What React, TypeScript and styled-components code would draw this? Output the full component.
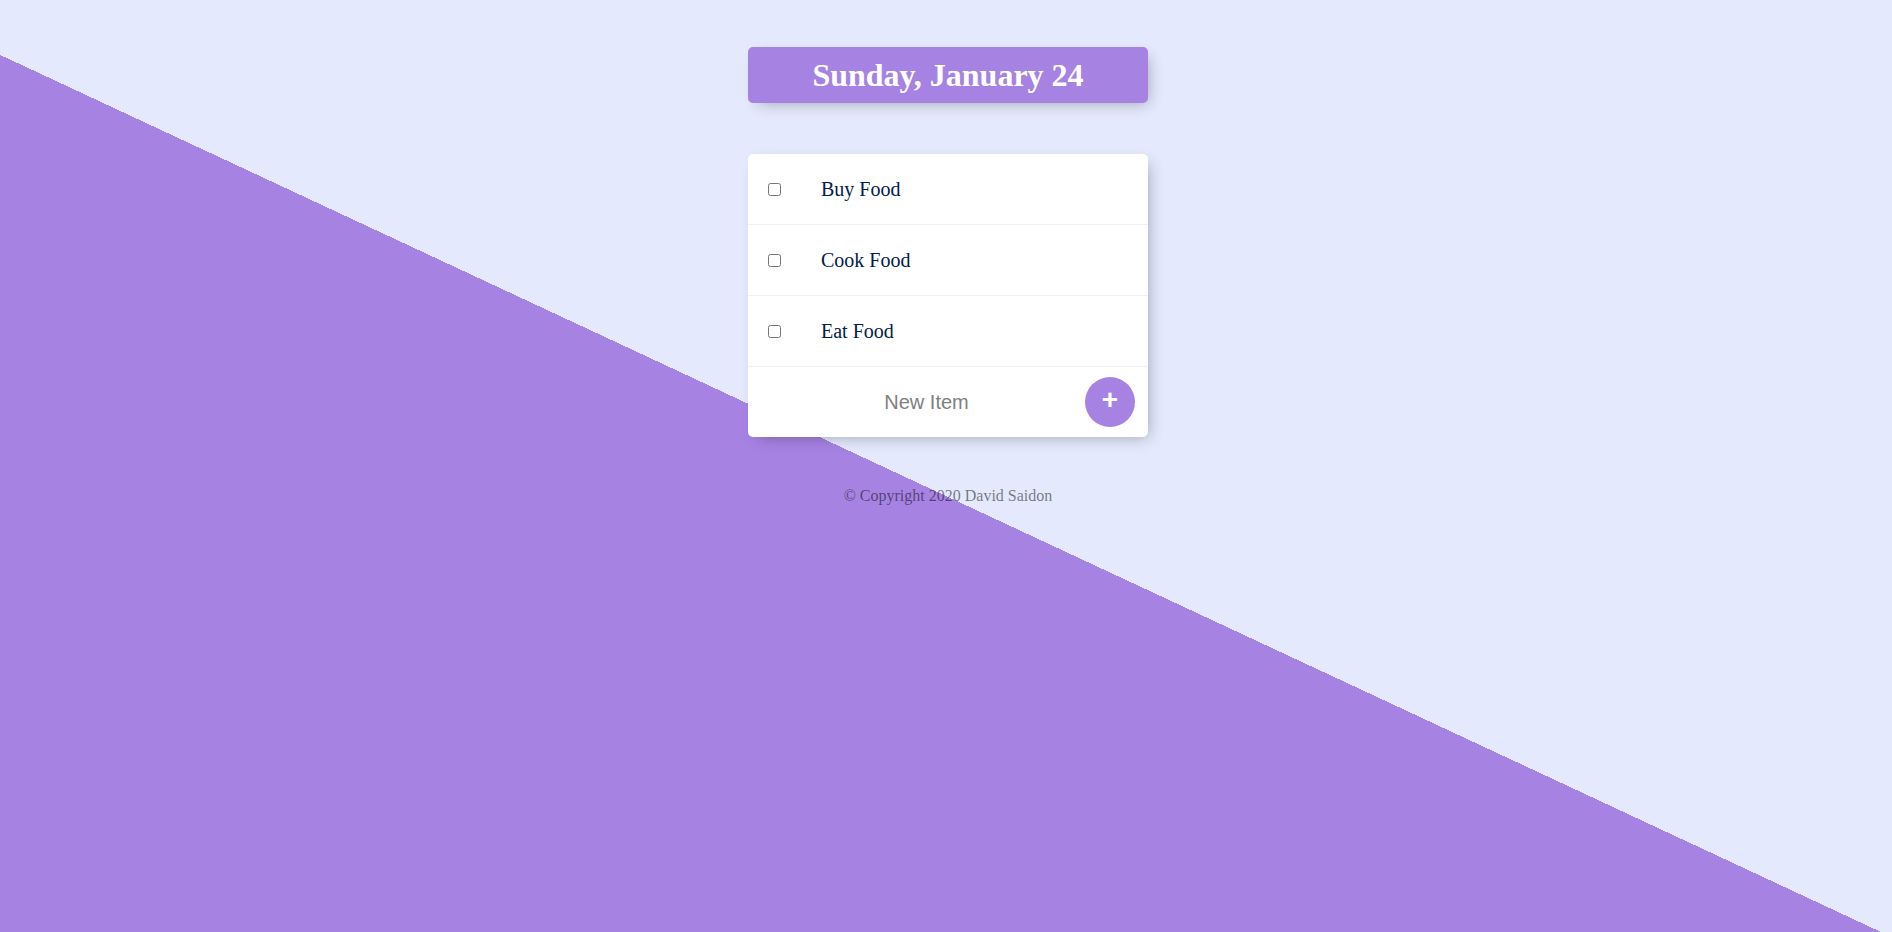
import * as React from "react";
import styled, { createGlobalStyle } from "styled-components";

const GlobalStyle = createGlobalStyle`
  html {
    background-color: #e4e9fd;
    background-image: linear-gradient(25deg, #a683e3 50%, #e4e9fd 50%);
    min-height: 992px;
    font-family: "Liberation Serif", "Times New Roman", serif;
  }
  body {
    margin: 0;
  }
`;

const Page = styled.div`
  padding-top: 47px;
  padding-left: 4px;
`;

const Box = styled.div`
  max-width: 400px;
  margin: 0 auto 51px;
  background: white;
  border-radius: 5px;
  box-shadow: 5px 5px 15px -5px rgba(0, 0, 0, 0.3);
`;

const Heading = styled(Box)`
  background-color: #a683e3;
  text-align: center;
`;

const Title = styled.h1`
  margin: 0;
  padding: 10px;
  color: #fff;
  font-size: 32px;
  line-height: 36px;
  font-weight: bold;
`;

const Item = styled.div`
  min-height: 70px;
  display: flex;
  align-items: center;
  border-bottom: 1px solid #f1f1f1;

  &:last-child {
    border-bottom: 0;
  }
`;

const Check = styled.input`
  margin: 20px;
  width: 13px;
  height: 13px;
`;

const Label = styled.p<{ $done: boolean }>`
  margin: 0;
  padding: 20px;
  font-size: 20px;
  font-weight: 200;
  color: #00204a;
  text-decoration: ${(p) => (p.$done ? "line-through" : "none")};
  text-decoration-color: #a683e3;
`;

const Form = styled.form`
  min-height: 70px;
  display: flex;
  align-items: center;
  margin-left: 20px;
  text-align: center;
`;

const TextInput = styled.input`
  text-align: center;
  height: 60px;
  border: none;
  padding: 1px 2px;
  font-family: "Liberation Sans", Arial, sans-serif;
  font-size: 20px;
  font-weight: 200;
  width: 313px;
  background: transparent;

  &::placeholder {
    color: grey;
    opacity: 1;
  }
  &:focus {
    outline: none;
    box-shadow: inset 0 -3px 0 0 #a683e3;
  }
`;

const AddButton = styled.button`
  height: 50px;
  width: 50px;
  border-radius: 50%;
  border: 0;
  background-color: #a683e3;
  color: #fff;
  font-family: "Liberation Sans", Arial, sans-serif;
  font-size: 28px;
  font-weight: bold;
  line-height: 28px;
  padding: 0 0 5px;
  cursor: pointer;
`;

const Footer = styled.footer`
  color: rgba(0, 0, 0, 0.5);
  text-align: center;
  font-size: 16px;
  line-height: 18px;
  margin-top: -1px;
`;

const App = (): React.ReactElement => {
  const [items, setItems] = React.useState([
    { name: "Buy Food", done: false },
    { name: "Cook Food", done: false },
    { name: "Eat Food", done: false },
  ]);
  const [text, setText] = React.useState("");

  const toggle = (i: number) =>
    setItems(items.map((it, j) => (j === i ? { ...it, done: !it.done } : it)));

  const add = (e: React.FormEvent) => {
    e.preventDefault();
    if (!text.trim()) return;
    setItems([...items, { name: text, done: false }]);
    setText("");
  };

  return (
    <Page>
      <GlobalStyle />
      <Heading>
        <Title>Sunday, January 24</Title>
      </Heading>
      <Box>
        {items.map((it, i) => (
          <Item key={i}>
            <Check type="checkbox" checked={it.done} onChange={() => toggle(i)} />
            <Label $done={it.done}>{it.name}</Label>
          </Item>
        ))}
        <Form onSubmit={add}>
          <TextInput
            type="text"
            placeholder="New Item"
            autoComplete="off"
            value={text}
            onChange={(e) => setText(e.target.value)}
          />
          <AddButton type="submit">+</AddButton>
        </Form>
      </Box>
      <Footer>© Copyright 2020 David Saidon</Footer>
    </Page>
  );
};

export default App;
